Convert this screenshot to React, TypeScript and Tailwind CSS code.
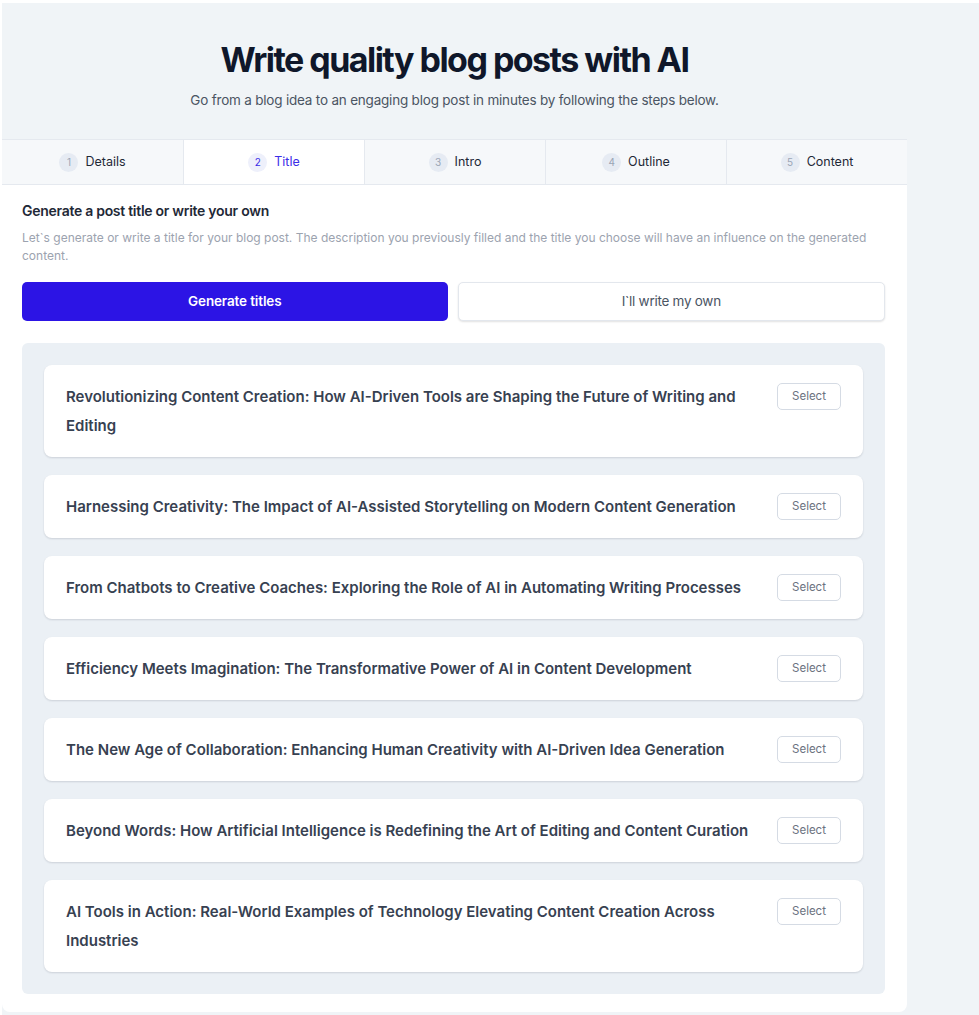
import React from 'react';

const steps = [
  { n: 1, label: 'Details' },
  { n: 2, label: 'Title' },
  { n: 3, label: 'Intro' },
  { n: 4, label: 'Outline' },
  { n: 5, label: 'Content' },
];

const titles = [
  'Revolutionizing Content Creation: How AI-Driven Tools are Shaping the Future of Writing and Editing',
  'Harnessing Creativity: The Impact of AI-Assisted Storytelling on Modern Content Generation',
  'From Chatbots to Creative Coaches: Exploring the Role of AI in Automating Writing Processes',
  'Efficiency Meets Imagination: The Transformative Power of AI in Content Development',
  'The New Age of Collaboration: Enhancing Human Creativity with AI-Driven Idea Generation',
  'Beyond Words: How Artificial Intelligence is Redefining the Art of Editing and Content Curation',
  'AI Tools in Action: Real-World Examples of Technology Elevating Content Creation Across Industries',
];

const App = () => {
  const active = 2;

  return (
    <div
      className="min-h-screen bg-[#f0f4f7] border-t-[3px] border-l-[2px] border-white"
      style={{ fontFamily: 'Inter, "Noto Sans", sans-serif' }}
    >
      <div className="w-[905px]">
        {/* Header */}
        <div className="pt-[37px] pb-[29px] text-center">
          <h1 className="text-[34px] leading-[40px] font-bold text-[#0f172a] tracking-[-0.045em]">
            Write quality blog posts with AI
          </h1>
          <p className="mt-[10px] text-[13.5px] leading-5 text-[#4b5563] tracking-[-0.015em]">
            Go from a blog idea to an engaging blog post in minutes by following the steps below.
          </p>
        </div>

        {/* Card */}
        <div className="bg-white rounded-b-lg">
          {/* Steps */}
          <div className="grid grid-cols-5 border-t border-b border-[#e5e9ef] bg-[#f6f8fa]">
            {steps.map((s) => {
              const isActive = s.n === active;
              return (
                <div
                  key={s.n}
                  className={`h-[44px] flex items-center justify-center gap-[7px] text-[12.5px] ${
                    s.n > 1 ? 'border-l border-[#e5e9ef]' : ''
                  } ${isActive ? 'bg-white text-[#3b2ee8]' : 'text-[#1f2937]'}`}
                >
                  <span
                    className={`w-[19px] h-[19px] rounded-full flex items-center justify-center text-[10px] ${
                      isActive ? 'bg-[#eef0fb] text-[#3b2ee8]' : 'bg-[#e6ebf3] text-[#9aa5b5]'
                    }`}
                  >
                    {s.n}
                  </span>
                  <span>{s.label}</span>
                </div>
              );
            })}
          </div>

          {/* Body */}
          <div className="px-[20px] pt-[16px] pb-[18px]">
            <h2 className="text-[14px] leading-5 font-semibold text-[#1f2937] tracking-[-0.02em]">
              Generate a post title or write your own
            </h2>
            <p className="mt-[8px] text-[12px] leading-[18px] text-[#9ca3af] pr-[10px]">
              Let`s generate or write a title for your blog post. The description you previously filled and the title you choose will have an influence on the generated content.
            </p>

            <div className="mt-[17px] flex gap-[10px] w-[863px]">
              <button className="flex-1 h-[39px] rounded-[5px] bg-[#2c14e5] text-white text-[13.5px] font-semibold tracking-[-0.01em]">
                Generate titles
              </button>
              <button className="flex-1 h-[39px] rounded-[5px] bg-white border border-[#e3e7ed] shadow-[0_1px_2px_rgba(0,0,0,0.12)] text-[#4b5563] text-[13.5px] tracking-[-0.02em]">
                I`ll write my own
              </button>
            </div>

            {/* Title list */}
            <div className="mt-[22px] w-[863px] bg-[#ebf0f5] rounded-[6px] p-[22px] flex flex-col gap-[18px]">
              {titles.map((t) => (
                <div
                  key={t}
                  className="bg-white rounded-[8px] shadow-[0_1px_2px_rgba(15,23,42,0.14)] pl-[22px] pr-[22px] py-[17px] flex items-start gap-6"
                >
                  <p className="flex-1 text-[15px] leading-[29px] font-semibold text-[#374151]">
                    {t}
                  </p>
                  <button className="mt-[1px] shrink-0 w-[64px] h-[27px] rounded-[5px] border border-[#d5dbe4] text-[11.5px] text-[#6b7280] bg-white">
                    Select
                  </button>
                </div>
              ))}
            </div>
          </div>
        </div>
      </div>
    </div>
  );
};

export default App;
